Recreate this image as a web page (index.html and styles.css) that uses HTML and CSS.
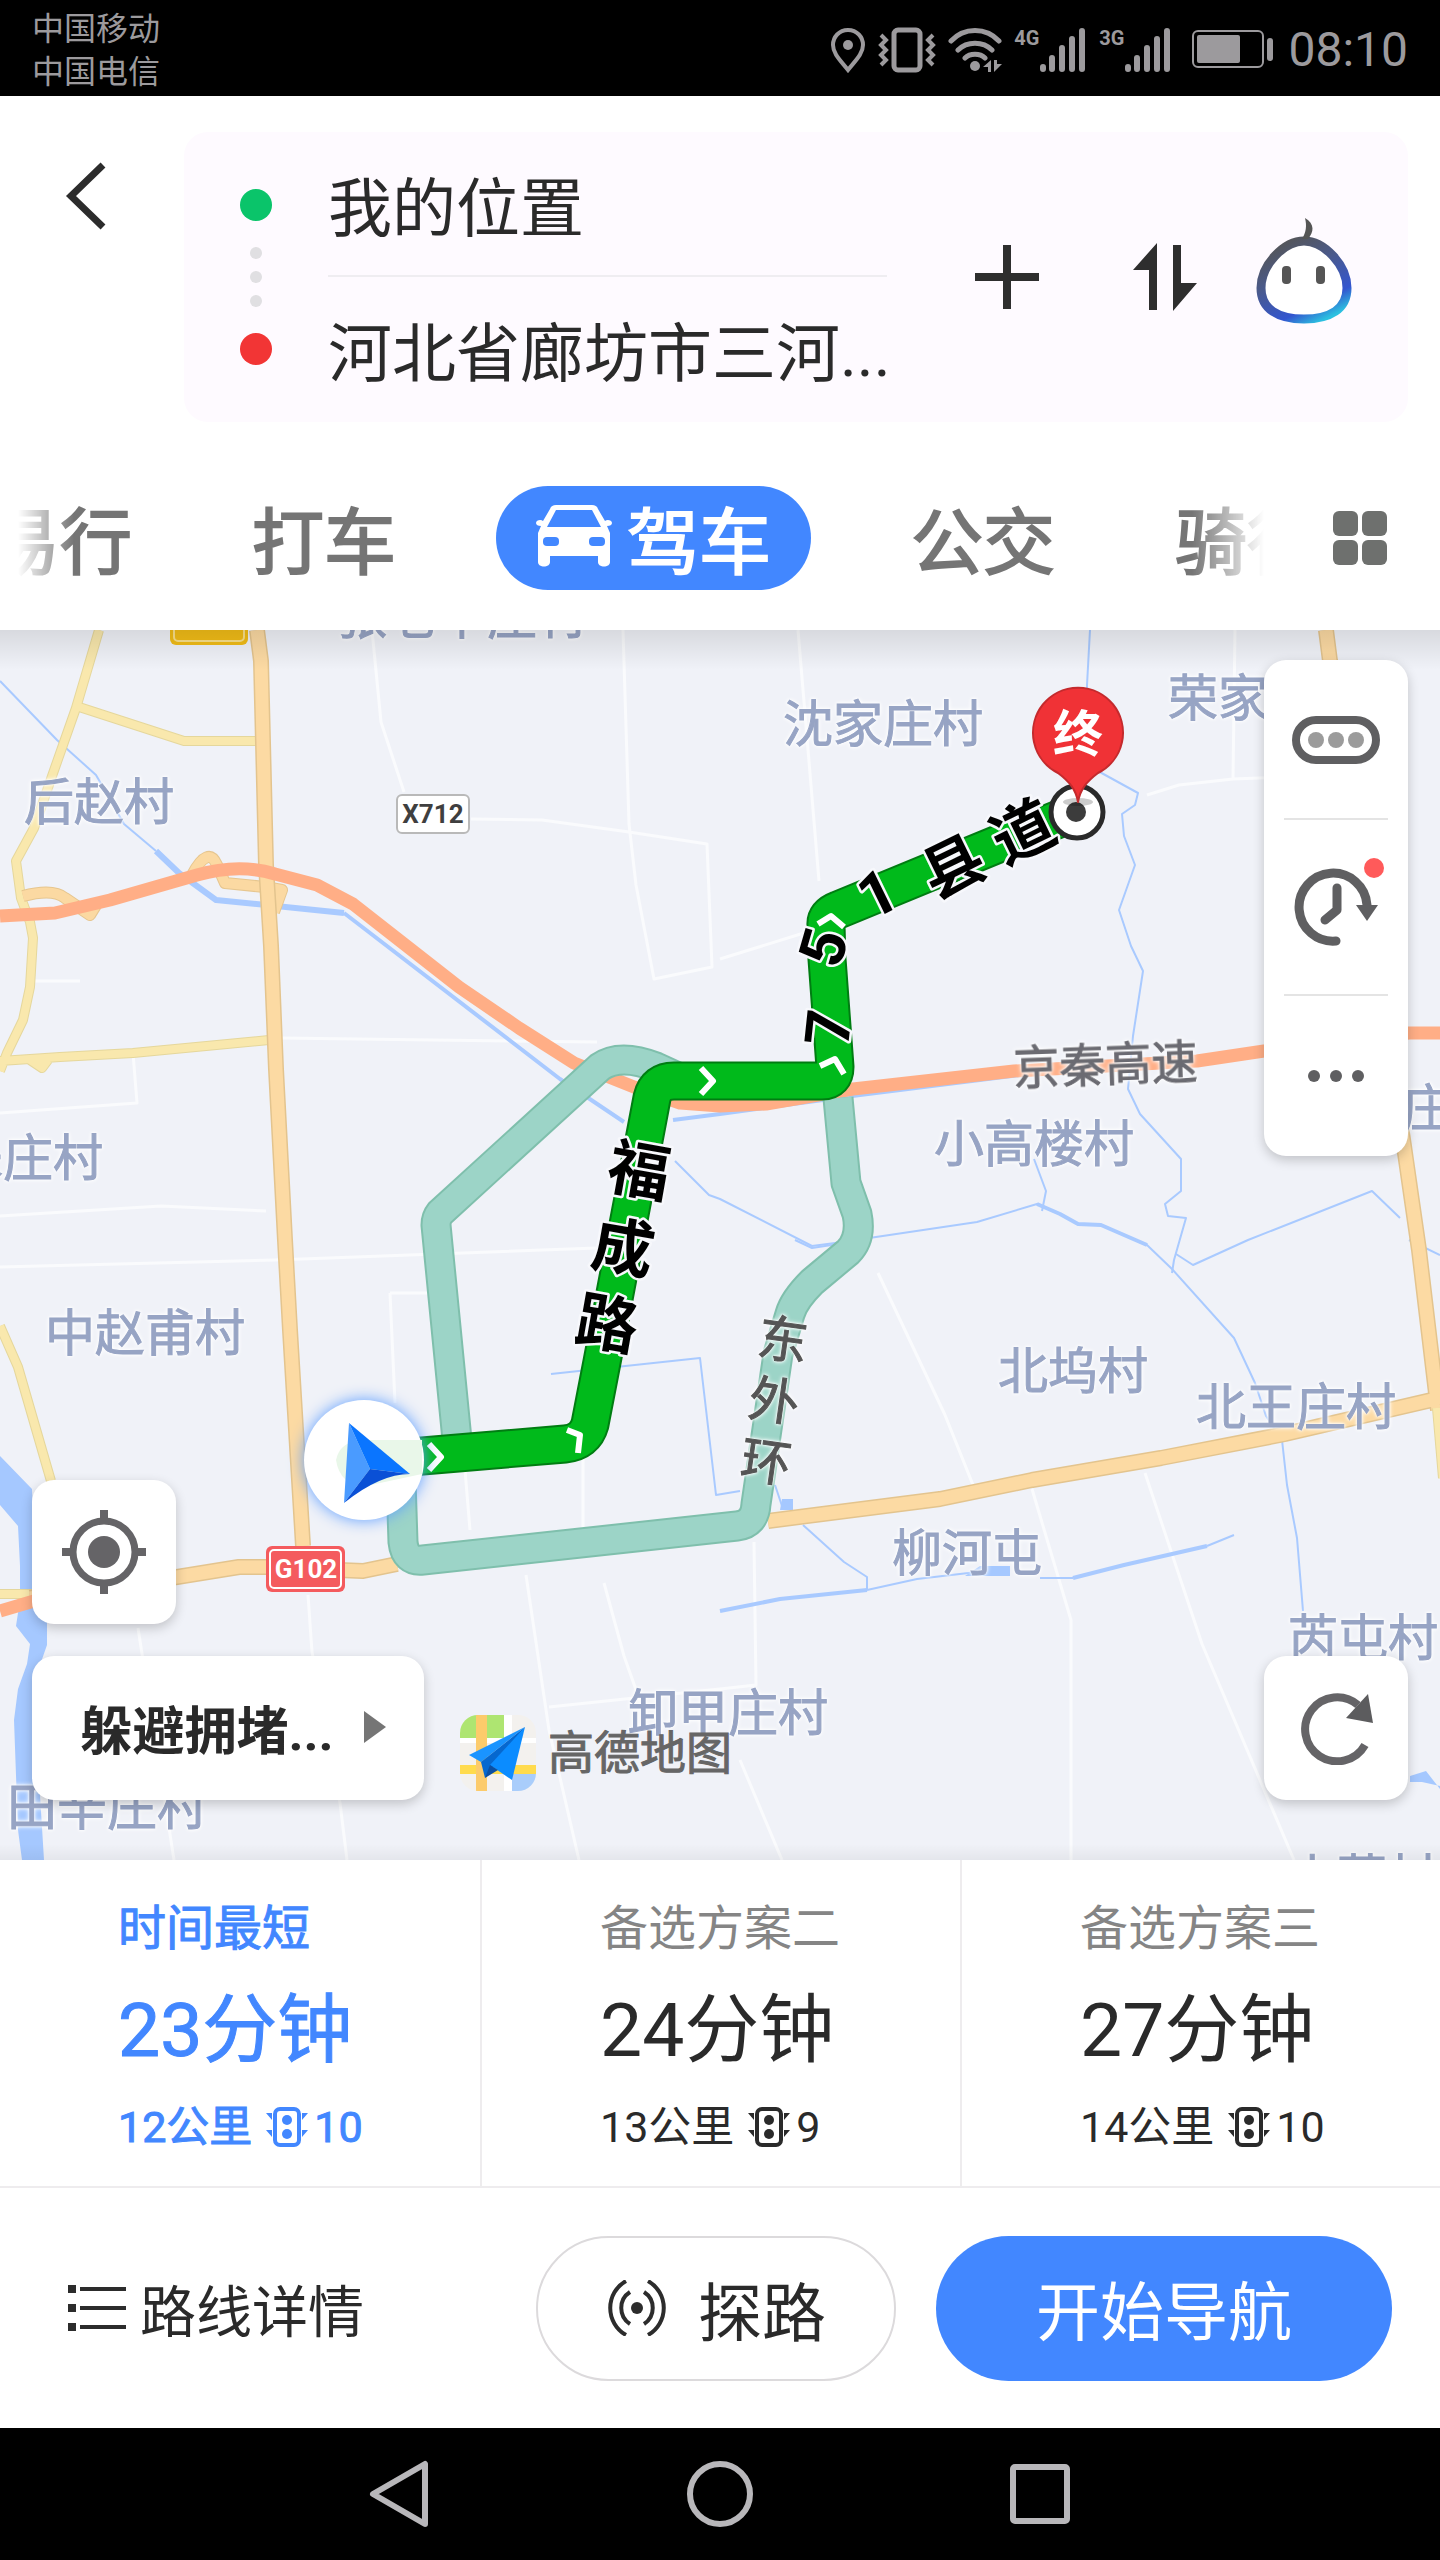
FILE: index.html
```html
<!DOCTYPE html>
<html lang="zh-CN">
<head>
  <meta charset="UTF-8">
  <title>路线规划</title>
  <meta name="viewport" content="width=device-width, initial-scale=1.0">
  <link rel="stylesheet" href="styles.css">
</head>
<body>
  <div class="app">
    <!-- Status bar -->
    <div class="status-bar">
      <div class="carriers">
        <span>中国移动</span>
        <span>中国电信</span>
      </div>
      <div class="status-icons">
        <svg width="36" height="46" viewBox="0 0 36 46">
          <path d="M18 3C9 3 3 10 3 18c0 9 8 16 15 25 7-9 15-16 15-25C33 10 27 3 18 3z" fill="none" stroke="currentColor" stroke-width="4"/>
          <circle cx="18" cy="18" r="5" fill="currentColor"/>
        </svg>
        <svg width="58" height="46" viewBox="0 0 58 46">
          <rect x="16" y="3" width="26" height="40" rx="4" fill="none" stroke="currentColor" stroke-width="5"/>
          <path d="M3 8l5 5-5 5 5 5-5 5 5 5-5 5M55 8l-5 5 5 5-5 5 5 5-5 5 5 5" fill="none" stroke="currentColor" stroke-width="4"/>
        </svg>
        <svg width="54" height="46" viewBox="0 0 54 46">
          <g fill="none" stroke="currentColor" stroke-width="5" stroke-linecap="round">
            <path d="M3 14c13-14 35-14 48 0M10 23c9-9 25-9 34 0M17 31c5-5 15-5 20 0"/>
          </g>
          <circle cx="27" cy="39" r="5" fill="currentColor"/>
          <path d="M43 33v12h-3v-5h-5zM46 33h3v4h5l-8 8z" fill="currentColor"/>
        </svg>
        <div class="signal">
          <span>4G</span>
          <svg width="48" height="46" viewBox="0 0 48 46">
            <path d="M4 40v2M13 31v11M23 21v21M33 12v30M43 4v38" stroke="currentColor" stroke-width="6" stroke-linecap="round"/>
          </svg>
        </div>
        <div class="signal">
          <span>3G</span>
          <svg width="48" height="46" viewBox="0 0 48 46">
            <path d="M4 40v2M13 31v11M23 21v21M33 12v30M43 4v38" stroke="currentColor" stroke-width="6" stroke-linecap="round"/>
          </svg>
        </div>
        <svg class="battery" width="82" height="40" viewBox="0 0 82 40">
          <rect x="1" y="1" width="70" height="36" rx="5" fill="none" stroke="currentColor" stroke-width="2"/>
          <rect x="5" y="5" width="43" height="28" rx="2" fill="currentColor"/>
          <rect x="75" y="8" width="6" height="23" rx="3" fill="currentColor"/>
        </svg>
        <span class="clock">08:10</span>
      </div>
    </div>

    <!-- Start / destination -->
    <header class="header">
      <div class="trip">
        <button class="back-btn" aria-label="返回">
          <svg width="44" height="70" viewBox="0 0 44 70">
            <path d="M39 4L7 35l32 31" fill="none" stroke="#2c2c2c" stroke-width="7"/>
          </svg>
        </button>
        <div class="trip-card">
          <div class="trip-dots">
            <i class="dot start"></i>
            <i class="dot small"></i>
            <i class="dot small"></i>
            <i class="dot small"></i>
            <i class="dot end"></i>
          </div>
          <div class="trip-fields">
            <input type="text" value="我的位置" aria-label="起点">
            <input type="text" value="河北省廊坊市三河..." aria-label="终点">
          </div>
          <div class="trip-actions">
            <button aria-label="添加途经点">
              <svg width="64" height="64" viewBox="0 0 64 64">
                <path d="M32 0v64M0 32h64" stroke="#2e2e2e" stroke-width="8"/>
              </svg>
            </button>
            <button aria-label="交换起终点">
              <svg width="64" height="68" viewBox="0 0 64 68" fill="#2e2e2e">
                <path d="M24 0v67h-8V27H0zM40 2h8v38h16L40 68z"/>
              </svg>
            </button>
            <button class="mascot" aria-label="语音助手">
              <svg width="98" height="108" viewBox="0 0 98 108">
                <defs>
                  <linearGradient id="mascotLine" x1="0.2" y1="0" x2="0.75" y2="1">
                    <stop offset="0" stop-color="#555"/>
                    <stop offset="0.4" stop-color="#4a5a8c"/>
                    <stop offset="0.8" stop-color="#3355cf"/>
                    <stop offset="1" stop-color="#2cc0e0"/>
                  </linearGradient>
                </defs>
                <path d="M49 24C29 24 6 48 6 71c0 21 17 31 43 31s43-10 43-31c0-23-23-47-43-47z" fill="#fff" stroke="url(#mascotLine)" stroke-width="9"/>
                <path d="M50 1c10 6 9 14 3 21h-6c4-7 5-13 3-21z" fill="#555"/>
                <rect x="27" y="49" width="9" height="18" rx="4" fill="#555"/>
                <rect x="61" y="49" width="9" height="18" rx="4" fill="#555"/>
              </svg>
            </button>
          </div>
        </div>
      </div>

      <!-- Travel modes -->
      <nav class="modes">
        <div class="mode-list">
          <button class="mode">易行</button>
          <button class="mode">打车</button>
          <button class="mode active">
            <svg width="76" height="62" viewBox="0 0 76 62">
              <path d="M20 0h36c3 0 5 1 6 4l7 12c2-2 7-1 7 2 0 2-2 3-5 3l3 7v29c0 6-12 6-12 0v-6H14v6c0 6-12 6-12 0V28l3-7c-3 0-5-1-5-3 0-3 5-4 7-2l7-12c1-3 3-4 6-4zM20 5L11 22h54L56 5z" fill="#fff" fill-rule="evenodd"/>
              <rect x="7" y="32" width="16" height="9" rx="4" fill="#4287ff"/>
              <rect x="53" y="32" width="16" height="9" rx="4" fill="#4287ff"/>
            </svg>
            驾车
          </button>
          <button class="mode">公交</button>
          <button class="mode">骑行</button>
        </div>
        <button class="more-modes" aria-label="全部出行方式">
          <svg width="54" height="54" viewBox="0 0 54 54" fill="#6e706e">
            <rect width="25" height="25" rx="6"/>
            <rect x="29" width="25" height="25" rx="6"/>
            <rect y="29" width="25" height="25" rx="6"/>
            <rect x="29" y="29" width="25" height="25" rx="6"/>
          </svg>
        </button>
      </nav>
    </header>

    <!-- Map -->
    <main class="map">
      <svg class="map-canvas" viewBox="0 630 1440 1230">
        <!-- village lanes -->
        <g class="lane">
          <path d="M372 630l9 92 23 70M623 630l6 194 7 61 18 94 58-12-5-123-78-12-87-12-71-1"/>
          <path d="M280 1038l317 4M0 1216l161-10 105 5M0 1267l275-7 322-12M390 1293h45M390 1293l5 110"/>
          <path d="M133 1053l4 50L0 1113M30 981h50M798 630l21 251M720 959l87-27M1235 630l-2 149-54 6-32 10M1233 779l50-2"/>
          <path d="M878 1273l67 142 28 70M1032 1489l39 131v240M1145 1473l57 171 92 216M754 1542l2 143-36 4-171 18"/>
          <path d="M526 1575l23 155 30 130M604 1583l20 73 16 45M583 1440v90M465 1470l5 60M308 1595l4 57 28 151 7 57M138 1628l36 232M740 1760l42 100"/>
        </g>

        <!-- water -->
        <g class="water">
          <path d="M0 681l57 59 39 35 28 49 32 27"/>
          <path class="wide" d="M156 851l23 22 37 27 128 13"/>
          <path class="mid" d="M344 913l216 166 64 43M673 1120l47-6 140-19 160-20"/>
          <path d="M675 1161l34 34 11 4 92 47 23-3 41-6 101-15 60-18 23 10 18 10 23 1 46 20 25 24 62 69 21 45 11 33 16 24 5 45 10 53 6 73"/>
          <path class="mid" d="M1037 1204l23 10 18 10 23 1 46 20"/>
          <path d="M1090 630l-3 55v80l51 28-3 12-13 9 2 22 11 29-16 45 12 36 12 25-10 65-5 53 12 25 41 45v32l-16 13 3 12 18 2-12 42-2 13"/>
          <path d="M1034 1159l12 32-4 20M1176 1254l17 11 55-25 124-49 28 27M1409 1240l31 15M795 1240l17 8 26-4"/>
          <path d="M551 1374l149-16 16 137 24-4M803 1525l41 37 23 15v13M775 1485l8 24"/>
          <path class="mid" d="M720 1611l60-12 87-9M1073 1578l51-13 83-19"/>
          <path d="M867 1590l50-11 60-7M1040 1578h33M1207 1546l27-11"/>
        </g>
        <g class="lake">
          <path d="M0 1456l32 33 3 71 12 50v35l-7 20 3 50-3 80 4 65H22l-4-30-4-110 4-31 9-25 3-20-14-18 4-26v-34l-2-40-18-21z"/>
          <path d="M782 1499h11v11h-13zM980 1566h30v10h-45zM1410 1776l16-5 14 18v-3l-18-4h-12z"/>
        </g>

        <!-- roads -->
        <g class="road-edge minor">
          <path id="minorRoads" d="M99 630l-23 78-25 71-17 49-18 33 5 37 9 24 3 16-3 49-7 33-16 33-7 18M76 706l108 35h73M0 1061l60-4 73-4 136-13M30 1060l12 8 6-8M0 1326l18 41 33 114M0 1594h34"/>
        </g>
        <use href="#minorRoads" class="road-fill minor"/>
        <g class="road-edge ramp">
          <path id="ramps" d="M192 875q16-30 25-10l8 18 40 4 17 3-8 22M23 896q30-8 42 2l25 17 8-13"/>
        </g>
        <use href="#ramps" class="road-fill ramp"/>
        <g class="road-edge major">
          <path id="majorRoads" d="M257 630l4 31 5 204 5 81 5 123 9 171 5 90 13 216M30 1598l147-21 62-10h27l97 4 34-7M768 1521l172-22 92-19 129-22 124-24 155-36M1326 630l4 31 74 485 15 104 19 160"/>
        </g>
        <use href="#majorRoads" class="road-fill major"/>
        <path class="road-edge minor" d="M1437 1408l6 70"/>
        <path class="road-fill minor" d="M1437 1408l6 70"/>
        <path class="highway" d="M0 916l55-3 55-13 87-25q42-12 78-1l42 11 36 19 106 83 60 41 55 35 60 24 46 16 40 3 46-2 87-15 161-18 183-10 67-10 145-18h36M0 1611l34-10"/>

        <!-- alternative routes -->
        <g class="alt-edge">
          <path id="altRoutes" d="M680 1078l-24-11q-36-14-56 0l-160 146q-4 5-4 12l22 225M401 1480l2 62q2 20 20 18l314-34q18-2 19-22l22-150 12-40q4-14 22-32l36-30q14-14 9-38l-11-31-8-85"/>
        </g>
        <use href="#altRoutes" class="alt-fill"/>

        <!-- selected route -->
        <g class="route-edge">
          <path id="mainRoute" d="M375 1460l190-16q20-2 25-20l12-62 50-264q4-17 22-17h148q13 0 13-14l-8-108-1-34q-1-10 12-15l238-98"/>
        </g>
        <use href="#mainRoute" class="route-fill"/>
        <g class="chevrons">
          <path d="M701 1068l12 13-12 13M429 1444l12 13-12 13M567 1430l13 5-2 18M820 1066l15-7 9 15M818 924l13-8 13 11"/>
        </g>

        <!-- road shields -->
        <rect x="170" y="610" width="78" height="35" rx="6" fill="#f2bd17"/>
        <rect x="174" y="614" width="70" height="27" rx="4" fill="none" stroke="#fbe18a" stroke-width="2"/>
        <rect x="397" y="795" width="72" height="38" rx="5" fill="#fff" stroke="#b9b9b9" stroke-width="2"/>
        <text class="shield" x="433" y="823" fill="#3f3f3f">X712</text>
        <rect x="266" y="1546" width="79" height="46" rx="6" fill="#f45b5e"/>
        <rect x="270" y="1550" width="71" height="38" rx="4" fill="none" stroke="#fff" stroke-width="2"/>
        <text class="shield" x="306" y="1578" fill="#fff">G102</text>

        <!-- place names -->
        <g class="place">
          <text x="337" y="634">张老辛庄村</text>
          <text x="783" y="742">沈家庄村</text>
          <text x="1168" y="716">荣家</text>
          <text x="24" y="820">后赵村</text>
          <text x="-47" y="1176">朱庄村</text>
          <text x="45" y="1351">中赵甫村</text>
          <text x="934" y="1162">小高楼村</text>
          <text x="1402" y="1126">庄</text>
          <text x="998" y="1389">北坞村</text>
          <text x="1196" y="1425">北王庄村</text>
          <text x="892" y="1571">柳河屯</text>
          <text x="1288" y="1656">芮屯村</text>
          <text x="628" y="1731">卸甲庄村</text>
          <text x="7" y="1825">田辛庄村</text>
          <text x="1287" y="1896">小董村</text>
        </g>
        <text class="road-name" transform="translate(1014 1084) rotate(-2)">京秦高速</text>
        <g class="street">
          <text transform="translate(783 1340) rotate(8)" y="18">东</text>
          <text transform="translate(774 1401) rotate(8)" y="18">外</text>
          <text transform="translate(766 1462) rotate(8)" y="18">环</text>
        </g>
        <g class="route-name">
          <text transform="translate(639 1171) rotate(10)" y="22">福</text>
          <text transform="translate(623 1248) rotate(10)" y="22">成</text>
          <text transform="translate(607 1324) rotate(10)" y="22">路</text>
          <text transform="translate(830 1028) rotate(-84)" y="20">7</text>
          <text transform="translate(825 948) rotate(-74)" y="20">5</text>
          <text transform="translate(878 895) rotate(-26)" y="20">1</text>
          <text transform="translate(953 867) rotate(-26)" y="22">县</text>
          <text transform="translate(1023 832) rotate(-26)" y="22">道</text>
        </g>

        <!-- destination pin -->
        <circle cx="1077" cy="812" r="26" fill="#fff" stroke="#2a2a2a" stroke-width="5"/>
        <circle cx="1076" cy="812" r="10" fill="#3c3c3c"/>
        <ellipse cx="1078" cy="802" rx="15" ry="4" fill="#000" opacity="0.2"/>
        <path d="M1078 802c-2-12-8-20-20-29a45 45 0 1 1 40 0c-12 9-18 17-20 29z" fill="#f03236" stroke="#c42a2d" stroke-width="2"/>
        <text class="pin-text" x="1078" y="752">终</text>

        <!-- current position -->
        <circle class="me-glow" cx="364" cy="1460" r="60"/>
        <path d="M336 1460q4-20 30-20h56v34l-56 12q-26 0-30-26z" fill="#e9f7e9"/>
        <path d="M349 1423l21 46-26 34z" fill="#4a9bff"/>
        <path d="M349 1423l61 51-40-5z" fill="#0a75ff"/>
        <path d="M370 1469l40 5q-30 0-66 29z" fill="#0a50d6"/>
      </svg>

      <div class="map-tools">
        <button aria-label="沿途搜索">
          <svg width="88" height="48" viewBox="0 0 88 48">
            <rect x="4" y="4" width="80" height="40" rx="20" fill="none" stroke="#5f5f61" stroke-width="8"/>
            <g fill="#9b9b9b">
              <circle cx="24" cy="24" r="8"/>
              <circle cx="44" cy="24" r="8"/>
              <circle cx="64" cy="24" r="8"/>
            </g>
          </svg>
        </button>
        <button class="history-btn" aria-label="出发时间">
          <svg width="84" height="80" viewBox="0 0 84 80">
            <path d="M42 74a34 34 0 1 1 31-36" fill="none" stroke="#5f5f61" stroke-width="9" stroke-linecap="round"/>
            <path d="M62 38h22L73 54z" fill="#5f5f61"/>
            <path d="M43 21v22L31 53" fill="none" stroke="#5f5f61" stroke-width="9" stroke-linecap="round" stroke-linejoin="round"/>
          </svg>
        </button>
        <button aria-label="更多">
          <svg width="58" height="14" viewBox="0 0 58 14" fill="#5f5f61">
            <circle cx="7" cy="7" r="6"/>
            <circle cx="29" cy="7" r="6"/>
            <circle cx="51" cy="7" r="6"/>
          </svg>
        </button>
      </div>

      <div class="map-left">
        <button class="square-btn" aria-label="定位">
          <svg width="84" height="84" viewBox="0 0 84 84">
            <circle cx="42" cy="42" r="31" fill="none" stroke="#656467" stroke-width="7"/>
            <circle cx="42" cy="42" r="16" fill="#656467"/>
            <path d="M42 0v12M42 72v12M0 42h12M72 42h12" stroke="#656467" stroke-width="8"/>
          </svg>
        </button>
        <div class="map-left-row">
          <button class="avoid-btn">
            躲避拥堵...
            <svg width="22" height="32" viewBox="0 0 22 32">
              <path d="M0 0l22 16L0 32z" fill="#757575"/>
            </svg>
          </button>
          <div class="brand">
            <svg width="76" height="76" viewBox="0 0 76 76">
              <defs>
                <clipPath id="brandClip"><rect width="76" height="76" rx="18"/></clipPath>
              </defs>
              <g clip-path="url(#brandClip)">
                <rect width="76" height="76" fill="#f3f1ee"/>
                <path d="M0 0h44v23H0z" fill="#aee571"/>
                <path d="M52 54h24v22H52z" fill="#a9cdfb"/>
                <path d="M0 50h76v9H0z" fill="#ffdb4d"/>
                <path d="M44 0h8v76h-8zM0 23h76v5H0z" fill="#fff"/>
                <path d="M16 0h11v76H16z" fill="#fccb6b"/>
              </g>
              <path d="M65 12L9 40l12 7z" fill="#1a94ff"/>
              <path d="M65 12L21 47l4 16z" fill="#0668cf"/>
              <path d="M65 12L30 50l22 15z" fill="#0b8cff"/>
              <path d="M25 63l5-13 8 5z" fill="#0a4fa3"/>
            </svg>
            <span>高德地图</span>
          </div>
        </div>
      </div>

      <button class="square-btn refresh-btn" aria-label="刷新">
        <svg width="74" height="74" viewBox="0 0 74 74">
          <path d="M66 54a32 32 0 1 1-7-40" fill="none" stroke="#656467" stroke-width="8"/>
          <path d="M69 3l5 29-27-5z" fill="#5c5c5e"/>
        </svg>
      </button>
    </main>

    <!-- Route options -->
    <svg class="sprite">
      <symbol id="light" viewBox="0 0 42 40">
        <rect x="9" y="2" width="24" height="36" rx="5" fill="none" stroke="currentColor" stroke-width="4"/>
        <circle cx="21" cy="13" r="5" fill="currentColor"/>
        <circle cx="21" cy="27" r="5" fill="currentColor"/>
        <path d="M0 6h6v7zM0 23h6v7zM42 6h-6v7zM42 23h-6v7z" fill="currentColor"/>
      </symbol>
    </svg>
    <section class="options">
      <button class="option selected">
        <span class="option-title">时间最短</span>
        <span class="option-time">23分钟</span>
        <span class="option-info">12公里 <svg width="42" height="40"><use href="#light"/></svg>10</span>
      </button>
      <button class="option">
        <span class="option-title">备选方案二</span>
        <span class="option-time">24分钟</span>
        <span class="option-info">13公里 <svg width="42" height="40"><use href="#light"/></svg>9</span>
      </button>
      <button class="option">
        <span class="option-title">备选方案三</span>
        <span class="option-time">27分钟</span>
        <span class="option-info">14公里 <svg width="42" height="40"><use href="#light"/></svg>10</span>
      </button>
    </section>

    <!-- Actions -->
    <footer class="actions">
      <button class="detail-btn">
        <svg width="58" height="46" viewBox="0 0 58 46">
          <path d="M0 4h8M0 23h8M0 42h8" stroke="#2c2c2c" stroke-width="8"/>
          <path d="M12 4h46M12 23h46M12 42h46" stroke="#2c2c2c" stroke-width="4"/>
        </svg>
        路线详情
      </button>
      <button class="explore-btn">
        <svg width="62" height="56" viewBox="0 0 62 56">
          <circle cx="31" cy="28" r="6" fill="#2c2c2c"/>
          <path d="M20 1a31 31 0 0 0 0 54M42 1a31 31 0 0 1 0 54M24 12a19 19 0 0 0 0 32M38 12a19 19 0 0 1 0 32" fill="none" stroke="#2c2c2c" stroke-width="4"/>
        </svg>
        探路
      </button>
      <button class="start-btn">开始导航</button>
    </footer>

    <!-- System navigation -->
    <nav class="system-nav">
      <button aria-label="返回">
        <svg width="66" height="70" viewBox="0 0 66 70">
          <path d="M58 5v60L6 35z"/>
        </svg>
      </button>
      <button aria-label="主屏幕">
        <svg width="66" height="70" viewBox="0 0 66 70">
          <circle cx="33" cy="35" r="30"/>
        </svg>
      </button>
      <button aria-label="最近任务">
        <svg width="66" height="70" viewBox="0 0 66 70">
          <rect x="6" y="8" width="54" height="54" rx="2"/>
        </svg>
      </button>
    </nav>
  </div>
</body>
</html>
```

FILE: styles.css
```css
* {
  box-sizing: border-box;
}

body {
  margin: 0;
  background: #fff;
  color: #2a2a2a;
  font-family: Roboto, "Noto Sans CJK SC", sans-serif;
}

button {
  display: flex;
  align-items: center;
  justify-content: center;
  padding: 0;
  border: 0;
  background: none;
  color: inherit;
  font: inherit;
  white-space: nowrap;
  cursor: pointer;
}

svg {
  display: block;
  flex: none;
}

.app {
  display: flex;
  flex-direction: column;
  min-height: 100vh;
}

/* Status bar */
.status-bar {
  display: flex;
  justify-content: space-between;
  height: 96px;
  padding: 8px 32px 4px;
  background: #000;
  color: #9c9a9d;
}

.carriers {
  display: flex;
  flex-direction: column;
  font-size: 32px;
  line-height: 43px;
}

.status-icons {
  display: flex;
  align-items: center;
  gap: 12px;
}

.signal {
  display: flex;
  align-items: flex-start;
}

.signal span {
  font-size: 20px;
  font-weight: 700;
  line-height: 22px;
}

.battery {
  margin: 0 2px 0 8px;
}

.clock {
  font-size: 48px;
  line-height: 48px;
}

/* Header */
.header {
  padding: 36px 0 40px;
}

.trip {
  display: flex;
  align-items: flex-start;
  padding-right: 32px;
}

.back-btn {
  width: 184px;
  padding: 29px 12px 0 0;
}

.trip-card {
  display: flex;
  flex: 1;
  align-items: center;
  height: 290px;
  padding-right: 55px;
  border-radius: 24px;
  background: #fefaff;
}

.trip-dots {
  display: flex;
  flex-direction: column;
  align-items: center;
  width: 144px;
  gap: 12px;
}

.dot {
  border-radius: 50%;
}

.dot.start,
.dot.end {
  width: 32px;
  height: 32px;
}

.dot.start {
  margin-bottom: 14px;
  background: #0ac46a;
}

.dot.end {
  margin-top: 14px;
  background: #f23535;
}

.dot.small {
  width: 12px;
  height: 12px;
  background: #e0dfe2;
}

.trip-fields {
  flex: 1;
  min-width: 0;
}

.trip-fields input {
  display: block;
  width: 100%;
  height: 144px;
  padding: 0 0 2px;
  border: 0;
  background: none;
  color: #2a2a2a;
  font: inherit;
  font-size: 64px;
  outline: none;
}

.trip-fields input:first-child {
  border-bottom: 2px solid #efedf1;
}

.trip-actions {
  display: flex;
  align-items: center;
  gap: 94px;
  padding-left: 88px;
}

.mascot {
  margin-left: -36px;
  padding-bottom: 12px;
}

/* Travel modes */
.modes {
  display: flex;
  align-items: center;
  justify-content: space-between;
  padding: 64px 53px 0 18px;
}

.mode-list {
  display: flex;
  flex: 1;
  align-items: center;
  gap: 80px;
  min-width: 0;
  margin-right: 69px;
  overflow: hidden;
  -webkit-mask-image: linear-gradient(to right, transparent 0, #000 56px, #000 calc(100% - 72px), transparent);
  mask-image: linear-gradient(to right, transparent 0, #000 56px, #000 calc(100% - 72px), transparent);
}

.mode {
  flex: none;
  height: 104px;
  padding: 0 20px 4px;
  color: #757575;
  font-size: 72px;
  -webkit-text-stroke: 2px currentColor;
}

.mode:first-child {
  margin-left: -50px;
}

.mode.active {
  gap: 15px;
  padding: 0 40px 4px;
  border-radius: 52px;
  background: #4287ff;
  color: #fff;
}

/* Map */
.map {
  position: relative;
  overflow: hidden;
  background: #f0f2f8;
}

.map::before {
  content: "";
  position: absolute;
  top: 0;
  left: 0;
  right: 0;
  height: 40px;
  background: linear-gradient(rgba(0, 0, 0, 0.1), transparent);
}

.map::after {
  content: "";
  position: absolute;
  left: 0;
  right: 0;
  bottom: 0;
  height: 16px;
  background: linear-gradient(transparent, rgba(0, 0, 0, 0.05));
}

.map-canvas {
  width: 100%;
  height: auto;
}

.map-canvas path {
  stroke-linejoin: round;
}

.lane {
  fill: none;
  stroke: #fafbfd;
  stroke-width: 3;
}

.water {
  fill: none;
  stroke: #a9caff;
  stroke-width: 2;
}

.water .mid {
  stroke-width: 4;
}

.water .wide {
  stroke-width: 6;
}

.lake {
  fill: #a5c8ff;
}

.road-edge,
.road-fill,
.highway {
  fill: none;
}

.road-edge.minor {
  stroke: #e5d79c;
  stroke-width: 10;
}

.road-fill.minor {
  stroke: #f9e8ad;
  stroke-width: 8;
}

.road-edge.ramp {
  stroke: #e6c68f;
  stroke-width: 12;
}

.road-fill.ramp {
  stroke: #fbd9a2;
  stroke-width: 10;
}

.road-edge.major {
  stroke: #e3c48e;
  stroke-width: 16;
}

.road-fill.major {
  stroke: #fcdaa3;
  stroke-width: 13;
}

.highway {
  stroke: #ffae86;
  stroke-width: 13;
}

.alt-edge,
.alt-fill,
.route-edge,
.route-fill {
  fill: none;
  stroke-linejoin: round;
}

.alt-edge {
  stroke: #7fbfac;
  stroke-width: 31;
}

.alt-fill {
  stroke: #9cd4c7;
  stroke-width: 27;
}

.route-edge {
  stroke: #007d12;
  stroke-width: 39;
}

.route-fill {
  stroke: #00ba1b;
  stroke-width: 35;
}

.chevrons {
  fill: none;
  stroke: #fff;
  stroke-width: 6;
}

.shield {
  font-size: 26px;
  font-weight: 700;
  text-anchor: middle;
}

.place,
.road-name,
.street {
  stroke-width: 1;
  filter: drop-shadow(0 0 1px #fff) drop-shadow(0 0 2px #fff);
}

.place {
  fill: #97a4c4;
  stroke: #97a4c4;
  font-size: 50px;
}

.road-name {
  fill: #6b6b72;
  stroke: #6b6b72;
  font-size: 46px;
}

.street {
  fill: #555;
  stroke: #555;
  font-size: 50px;
  text-anchor: middle;
}

.route-name {
  fill: #000;
  stroke: #f7f8fc;
  stroke-width: 5;
  stroke-linejoin: round;
  paint-order: stroke;
  font-size: 62px;
  font-weight: 700;
  text-anchor: middle;
}

.pin-text {
  fill: #fff;
  font-size: 50px;
  font-weight: 700;
  text-anchor: middle;
}

.me-glow {
  fill: #fff;
  filter: drop-shadow(0 0 8px #5c9dff);
}

.map-tools,
.square-btn,
.avoid-btn {
  border-radius: 22px;
  background: #fff;
  box-shadow: 0 4px 12px rgba(0, 0, 0, 0.2);
}

.map-tools {
  position: absolute;
  top: 30px;
  right: 32px;
  width: 144px;
  padding: 0 20px;
}

.map-tools button {
  position: relative;
  width: 100%;
  height: 160px;
}

.map-tools .history-btn {
  height: 178px;
  margin-top: -2px;
  border-top: 2px solid #e4e4e4;
  border-bottom: 2px solid #e4e4e4;
}

/* unread dot */
.history-btn::after {
  content: "";
  position: absolute;
  top: 38px;
  right: 4px;
  width: 20px;
  height: 20px;
  border-radius: 50%;
  background: #ff5a5a;
}

.map-left {
  position: absolute;
  left: 32px;
  bottom: 60px;
  display: flex;
  flex-direction: column;
  gap: 32px;
}

.map-left-row {
  display: flex;
  align-items: center;
  gap: 36px;
}

.square-btn {
  width: 144px;
  height: 144px;
}

.refresh-btn {
  position: absolute;
  right: 32px;
  bottom: 60px;
}

.avoid-btn {
  width: 392px;
  height: 144px;
  padding: 0 0 2px 10px;
  gap: 30px;
  font-size: 52px;
  font-weight: 700;
}

.brand {
  display: flex;
  align-items: center;
  gap: 12px;
  padding-top: 50px;
  color: #666;
  font-size: 46px;
  line-height: 48px;
  -webkit-text-stroke: 1px currentColor;
}

/* Route options */
.sprite {
  display: none;
}

.options {
  display: grid;
  grid-template-columns: repeat(3, 1fr);
  border-bottom: 2px solid #eeecee;
}

.option {
  flex-direction: column;
  align-items: flex-start;
  height: 326px;
  padding: 6px 0 0 118px;
}

.option + .option {
  border-left: 2px solid #eeecee;
}

.option-title {
  color: #858585;
  font-size: 48px;
  line-height: 72px;
}

.option-time {
  font-size: 75px;
  line-height: 130px;
}

.option-info {
  display: flex;
  align-items: center;
  gap: 6px;
  font-size: 43px;
  line-height: 64px;
}

.option-info svg {
  margin-left: 8px;
}

.selected,
.selected .option-title {
  color: #4287ff;
  -webkit-text-stroke: 1px currentColor;
}

/* Actions */
.actions {
  display: flex;
  align-items: center;
  gap: 40px;
  padding: 48px 48px 47px 68px;
}

.actions button {
  height: 145px;
  padding-bottom: 2px;
  border-radius: 73px;
}

.actions .detail-btn {
  gap: 14px;
  margin-right: auto;
  font-size: 56px;
}

.actions .explore-btn {
  width: 360px;
  gap: 30px;
  border: 2px solid #dcdadc;
  font-size: 64px;
}

.actions .start-btn {
  width: 456px;
  padding-bottom: 4px;
  background: #4287ff;
  color: #fff;
  font-size: 64px;
}

/* System navigation */
.system-nav {
  display: flex;
  flex: 1;
  align-items: center;
  justify-content: center;
  gap: 160px;
  min-height: 132px;
  background: #000;
}

.system-nav button {
  width: 160px;
}

.system-nav svg {
  fill: none;
  stroke: #b8b7ba;
  stroke-width: 6;
  stroke-linejoin: round;
}
```
